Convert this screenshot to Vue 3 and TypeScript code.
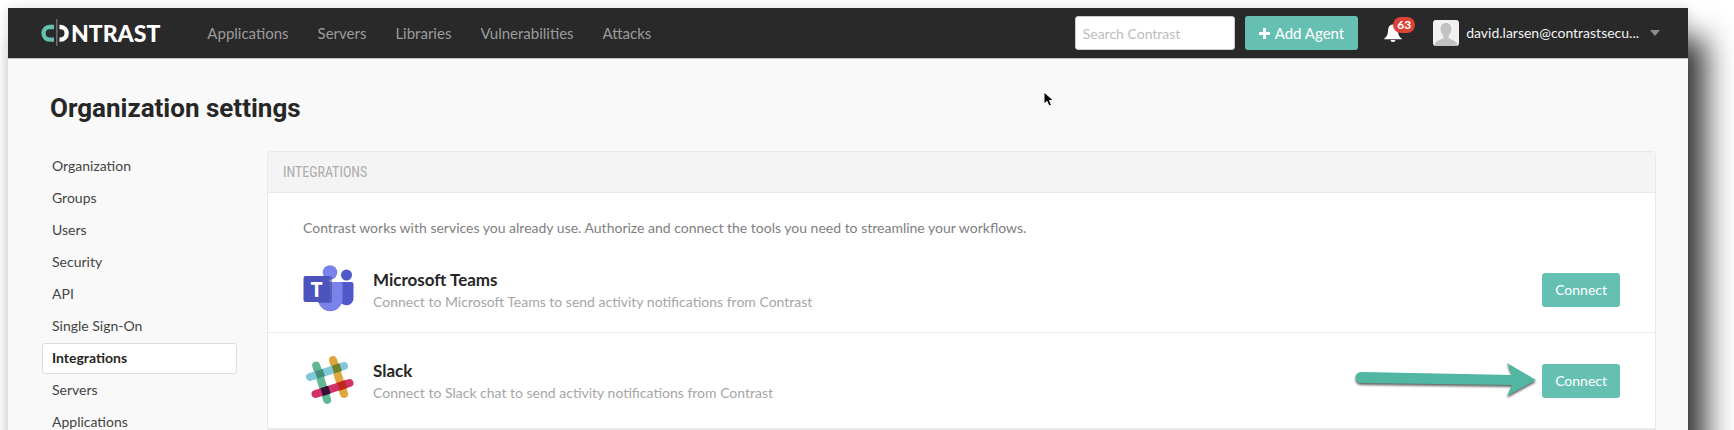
<script setup lang="ts">
interface Integration {
  id: string
  name: string
  description: string
  highlighted: boolean
}

const navItems: string[] = ['Applications', 'Servers', 'Libraries', 'Vulnerabilities', 'Attacks']

const settings: string[] = [
  'Organization',
  'Groups',
  'Users',
  'Security',
  'API',
  'Single Sign-On',
  'Integrations',
  'Servers',
  'Applications',
]
const activeSetting = 'Integrations'

const integrations: Integration[] = [
  {
    id: 'teams',
    name: 'Microsoft Teams',
    description: 'Connect to Microsoft Teams to send activity notifications from Contrast',
    highlighted: false,
  },
  {
    id: 'slack',
    name: 'Slack',
    description: 'Connect to Slack chat to send activity notifications from Contrast',
    highlighted: true,
  },
]
</script>

<template>
  <div class="stage">
    <div class="window">
      <header class="topbar">
        <a class="logo" href="#" aria-label="Contrast">
          <svg class="logo-mark" width="30" height="28" viewBox="0 0 30 28" aria-hidden="true">
            <path d="M14 8H9.500a6 6.300 0 0 0 0 12.600h4.500" fill="none" stroke="#66c0b2" stroke-width="4.400" />
            <path d="M16.800 0v27" stroke="#6d6d6d" stroke-width="1.500" />
            <path d="M19.500 8h1a6.200 6.300 0 0 1 0 12.600h-1" fill="none" stroke="#fff" stroke-width="4.400" />
          </svg>
          <span class="logo-text">NTRAST</span>
        </a>
        <nav class="nav" aria-label="Main">
          <a v-for="item in navItems" :key="item" href="#">{{ item }}</a>
        </nav>
        <input class="search" type="search" placeholder="Search Contrast" aria-label="Search Contrast" />
        <button class="btn add-agent" type="button">
          <svg width="11" height="11" viewBox="0 0 11 11" aria-hidden="true">
            <path d="M4 0h3v4h4v3h-4v4h-3v-4h-4v-3h4z" fill="#fff" />
          </svg>
          Add Agent
        </button>
        <button class="bell" type="button" aria-label="Notifications">
          <svg width="18" height="18" viewBox="0 0 18 18" aria-hidden="true">
            <path d="M8.500 0.500c-3 .3-4.200 2.800-4.400 5.500-.3 4.500-1 6.500-3.800 8.500v.7h17.400v-.7c-2.800-2-3.500-4-3.800-8.500-.2-2.700-1.400-5.200-4.400-5.500z" fill="#fff" />
            <path d="M6.500 16a2.500 2 0 0 0 5 0z" fill="#fff" />
          </svg>
          <span class="badge">63</span>
        </button>
        <button class="account" type="button">
          <svg class="avatar" width="26" height="26" viewBox="0 0 26 26" aria-hidden="true">
            <rect width="26" height="26" rx="3" fill="#f1f1f1" />
            <path d="M13 3c-3.500 0-5.300 2.300-5.300 5.700 0 3 1 5.500 2.800 7v2.300c-1.500 1.600-7 2-8.500 5.500-.4 1-.3 2.500-.3 2.500h22.600s.1-1.500-.3-2.500c-1.500-3.500-7-3.900-8.500-5.500v-2.300c1.800-1.500 2.800-4 2.800-7 0-3.400-1.800-5.700-5.300-5.700z" fill="#c2c2c2" />
          </svg>
          <span>david.larsen@contrastsecu...</span>
          <svg class="caret" width="10" height="6" viewBox="0 0 10 6" aria-hidden="true">
            <path d="M0 0h10l-5 6z" fill="#8c8c8c" />
          </svg>
        </button>
      </header>

      <main class="page">
        <h1>Organization settings</h1>
        <div class="columns">
          <nav class="sidebar" aria-label="Organization settings">
            <a
              v-for="item in settings"
              :key="item"
              href="#"
              :class="{ active: item === activeSetting }"
              :aria-current="item === activeSetting ? 'page' : undefined"
            >{{ item }}</a>
          </nav>

          <section class="panel">
            <h2>INTEGRATIONS</h2>
            <p class="intro">
              Contrast works with services you already use. Authorize and connect the tools you need to streamline your workflows.
            </p>
            <ul>
              <li v-for="entry in integrations" :key="entry.id">
                <svg v-if="entry.id === 'teams'" class="icon" width="52" height="50" viewBox="0 1 52 50" aria-hidden="true">
                  <circle cx="43.500" cy="11" r="5.500" fill="#5059c9" />
                  <path d="M36 18h12.500a2 2 0 0 1 2 2v13a7 7 0 0 1-14.500 2z" fill="#5059c9" />
                  <circle cx="27" cy="8.500" r="7.300" fill="#7b83eb" />
                  <path d="M16 18h21.500a2 2 0 0 1 2 2v16a12.300 12.300 0 0 1-24.500 0z" fill="#7b83eb" />
                  <path d="M16 12h11a2 2 0 0 1 2 2v23a2 2 0 0 1-2 2h-11.600z" fill="#3c4296" opacity=".55" />
                  <rect x="0.500" y="12" width="26" height="26" rx="2" fill="#4b53bc" />
                  <text x="13.500" y="32.500" class="teams-letter">T</text>
                </svg>
                <svg v-else class="icon" width="52" height="50" viewBox="1 1 52 50" aria-hidden="true">
                  <g class="slack-bars" fill="none" stroke-linecap="round">
                    <path d="M14.200 10.500l11 34.500" stroke="#63b792" />
                    <path d="M31 5l11 34" stroke="#e0a63b" />
                    <path d="M8 22l34-11" stroke="#80c7da" />
                    <path d="M13.500 39l34-11" stroke="#d13164" />
                  </g>
                  <path d="M12.800 16.200l7.700-2.500 2.500 7.600-7.700 2.500z" fill="#468e78" />
                  <path d="M29.700 10.800l7.700-2.500 2.500 7.600-7.700 2.500z" fill="#6f812b" />
                  <path d="M18.400 33.300l7.700-2.500 2.500 7.600-7.700 2.500z" fill="#351039" />
                  <path d="M35.200 27.800l7.700-2.500 2.500 7.600-7.700 2.500z" fill="#bf2a1d" />
                </svg>
                <div class="details">
                  <h3>{{ entry.name }}</h3>
                  <p>{{ entry.description }}</p>
                </div>
                <div class="action">
                  <svg v-if="entry.highlighted" class="arrow" width="184" height="40" viewBox="0 0 184 40" aria-hidden="true">
                    <path d="M7 10l151 3-5-12 29 17-29 16 5-11-151-2a5.500 5.500 0 0 1 0-11z" fill="#51b7a2" />
                  </svg>
                  <button class="btn" type="button">Connect</button>
                </div>
              </li>
            </ul>
          </section>
        </div>
      </main>

      <svg class="pointer" width="14" height="20" viewBox="0 0 14 20" aria-hidden="true">
        <path d="M1 1v12l3-2.600 2 4.600 2.500-1-2-4.500h4z" fill="#000" stroke="#fff" stroke-width="1" />
      </svg>
    </div>
  </div>
</template>

<style>
body {
  margin: 0;
  background: #fff;
}
</style>

<style scoped>
.stage {
  box-sizing: border-box;
  height: 100vh;
  padding: 8px 46px 0 8px;
  overflow: hidden;
  font-family: Lato, "Liberation Sans", sans-serif;
  font-size: 14px;
  line-height: 20px;
}
.window {
  position: relative;
  min-height: 500px;
  background: #f9f9f9;
  box-shadow: 18px 30px 28px rgba(0, 0, 0, 0.78), 0 0 12px rgba(0, 0, 0, 0.12);
}
a {
  color: inherit;
  text-decoration: none;
}
button,
input {
  font: inherit;
}
h1, h2, h3, p, ul {
  margin: 0;
  padding: 0;
}
.topbar {
  display: flex;
  align-items: center;
  box-sizing: border-box;
  height: 51px;
  padding: 0 28px 0 32px;
  background: #292929;
  border-bottom: 1px solid #c4c4c4;
}
.logo {
  display: flex;
  align-items: center;
  color: #fff;
}
.logo-mark {
  margin-right: 1px;
}
.logo-text {
  font-size: 23px;
  font-weight: 900;
}
.nav {
  display: flex;
  flex: 1;
  gap: 29px;
  margin-left: 47px;
  color: #9b9b9b;
  font-size: 15px;
}
.search {
  box-sizing: border-box;
  width: 160px;
  height: 34px;
  padding: 0 7px;
  background: #fff;
  border: 1px solid #ccc;
  border-radius: 3px;
}
.search::placeholder {
  color: #bdbdbd;
}
.btn {
  box-sizing: border-box;
  height: 34px;
  padding: 0 13px;
  color: #fff;
  background: #66c0b2;
  border: 0;
  border-radius: 3px;
}
.add-agent {
  display: flex;
  align-items: center;
  gap: 5px;
  margin-left: 10px;
  padding: 0 14px;
  font-size: 15px;
}
.bell {
  position: relative;
  display: flex;
  margin-left: 26px;
  padding: 0;
  background: none;
  border: 0;
}
.badge {
  position: absolute;
  top: -7px;
  left: 9px;
  width: 22px;
  border-radius: 8px;
  color: #fff;
  background: #dc4437;
  font-size: 12px;
  font-weight: 700;
  line-height: 16px;
  text-align: center;
}
.account {
  display: flex;
  align-items: center;
  margin-left: 31px;
  padding: 0;
  color: #f2f2f2;
  background: none;
  border: 0;
}
.avatar {
  margin-right: 7px;
}
.caret {
  margin-left: 11px;
}
.page {
  padding: 34px 32px 0 34px;
}
h1 {
  padding-left: 8px;
  color: #262626;
  font-family: Roboto, "Liberation Sans", sans-serif;
  font-size: 26px;
  font-weight: 700;
  line-height: 30px;
}
.columns {
  display: flex;
  align-items: flex-start;
  gap: 30px;
  margin-top: 28px;
}
.sidebar {
  display: flex;
  flex: 0 0 195px;
  flex-direction: column;
  gap: 1px;
  color: #444;
}
.sidebar a {
  box-sizing: border-box;
  height: 31px;
  padding: 0 9px;
  border: 1px solid transparent;
  border-radius: 3px;
  line-height: 28px;
}
.sidebar .active {
  color: #262626;
  background: #fff;
  border-color: #ddd;
  font-weight: 700;
}
.panel {
  flex: 1;
  background: #fff;
  border: 1px solid #e8e8e8;
  border-radius: 4px 4px 0 0;
}
h2 {
  padding: 10px 15px;
  color: #adadad;
  background: #f4f4f4;
  border-bottom: 1px solid #e8e8e8;
  font-family: "Roboto Condensed", Roboto, sans-serif;
  font-size: 14px;
  font-weight: 400;
}
.intro {
  padding: 25px 35px 0;
  color: #808080;
}
ul {
  list-style: none;
}
li {
  display: flex;
  align-items: center;
  padding: 27px 35px 17px;
  border-bottom: 1px solid #ebebeb;
}
li + li {
  padding: 23px 35px 22px;
}
.teams-letter {
  fill: #fff;
  font-family: "Open Sans", sans-serif;
  font-size: 21px;
  font-weight: 700;
  text-anchor: middle;
}
.slack-bars path {
  stroke-width: 8px;
}
.icon {
  overflow: visible;
}
.details {
  flex: 1;
  margin-left: 18px;
}
h3 {
  color: #262626;
  font-size: 17px;
  font-weight: 700;
  line-height: 24px;
}
.details p {
  color: #a6a6a6;
}
.action {
  position: relative;
}
.arrow {
  position: absolute;
  top: -2px;
  right: calc(100% + 4px);
  filter: drop-shadow(0 2px 1px rgba(0, 0, 0, 0.6));
}
.pointer {
  position: absolute;
  top: 83px;
  left: 1035px;
}
</style>
